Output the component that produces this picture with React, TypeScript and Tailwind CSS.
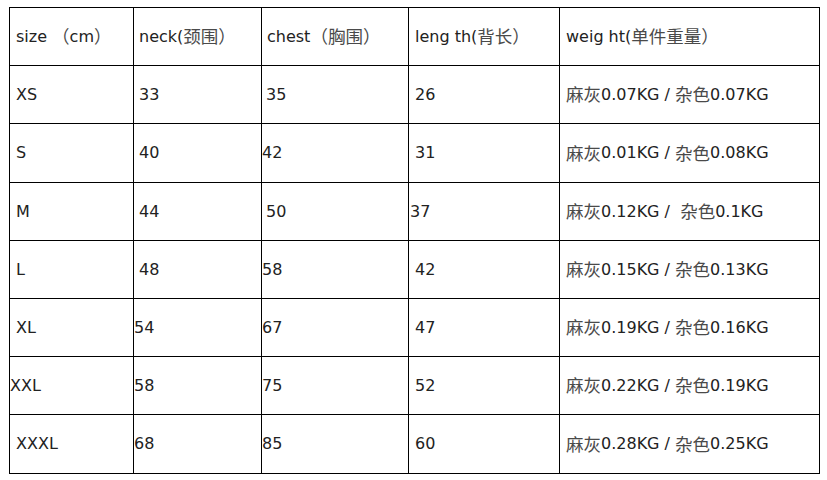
const cols = ["w-[124px]", "w-[128px]", "w-[147px]", "w-[151px]", "w-[260px]"];
const heights = ["h-[58px]", "h-[58px]", "h-[59px]", "h-[58px]", "h-[58px]", "h-[58px]", "h-[58px]", "h-[59px]"];

type Cell = { text: React.ReactNode; pad: string };

const zh = (s: string) => (
  <span className="text-[#4a4a4a] text-[17.5px] [font-family:'Noto_Sans_CJK_SC',sans-serif]">{s}</span>
);

const weight = (a: string, b: string, wide = false) => (
  <>
    {zh("麻灰")}
    {a} /{wide ? "\u00a0\u00a0" : " "}
    {zh("杂色")}
    {b}
  </>
);

const rows: Cell[][] = [
  [
    { text: <>size {zh("（")}cm{zh("）")}</>, pad: "pl-[6px]" },
    { text: <>neck({zh("颈围）")}</>, pad: "pl-[5px]" },
    { text: <>chest{zh("（胸围）")}</>, pad: "pl-[5px]" },
    { text: <>leng th({zh("背长）")}</>, pad: "pl-[6px]" },
    { text: <>weig ht({zh("单件重量）")}</>, pad: "pl-[6px]" },
  ],
  [
    { text: "XS", pad: "pl-[6px]" },
    { text: "33", pad: "pl-[5px]" },
    { text: "35", pad: "pl-[4px]" },
    { text: "26", pad: "pl-[6px]" },
    { text: weight("0.07KG", "0.07KG"), pad: "pl-[6px]" },
  ],
  [
    { text: "S", pad: "pl-[6px]" },
    { text: "40", pad: "pl-[5px]" },
    { text: "42", pad: "pl-0" },
    { text: "31", pad: "pl-[6px]" },
    { text: weight("0.01KG", "0.08KG"), pad: "pl-[6px]" },
  ],
  [
    { text: "M", pad: "pl-[6px]" },
    { text: "44", pad: "pl-[5px]" },
    { text: "50", pad: "pl-[4px]" },
    { text: "37", pad: "pl-[1px]" },
    { text: weight("0.12KG", "0.1KG", true), pad: "pl-[6px]" },
  ],
  [
    { text: "L", pad: "pl-[6px]" },
    { text: "48", pad: "pl-[5px]" },
    { text: "58", pad: "pl-0" },
    { text: "42", pad: "pl-[6px]" },
    { text: weight("0.15KG", "0.13KG"), pad: "pl-[6px]" },
  ],
  [
    { text: "XL", pad: "pl-[6px]" },
    { text: "54", pad: "pl-0" },
    { text: "67", pad: "pl-0" },
    { text: "47", pad: "pl-[6px]" },
    { text: weight("0.19KG", "0.16KG"), pad: "pl-[6px]" },
  ],
  [
    { text: "XXL", pad: "pl-0" },
    { text: "58", pad: "pl-0" },
    { text: "75", pad: "pl-0" },
    { text: "52", pad: "pl-[6px]" },
    { text: weight("0.22KG", "0.19KG"), pad: "pl-[6px]" },
  ],
  [
    { text: "XXXL", pad: "pl-[6px]" },
    { text: "68", pad: "pl-0" },
    { text: "85", pad: "pl-0" },
    { text: "60", pad: "pl-[6px]" },
    { text: weight("0.28KG", "0.25KG"), pad: "pl-[6px]" },
  ],
];

export default function App() {
  return (
    <div className="w-[827px] h-[480px] bg-white pt-[7px] pl-[9px] text-[#222] text-[16px] [font-family:'DejaVu_Sans',sans-serif]">
      <div className="inline-flex flex-col border-l border-t border-black">
        {rows.map((row, r) => (
          <div key={r} className={`flex ${heights[r]}`}>
            {row.map((cell, c) => (
              <div
                key={c}
                className={`${cols[c]} ${cell.pad} flex items-center whitespace-pre border-r border-b border-black`}
              >
                {cell.text}
              </div>
            ))}
          </div>
        ))}
      </div>
    </div>
  );
}
